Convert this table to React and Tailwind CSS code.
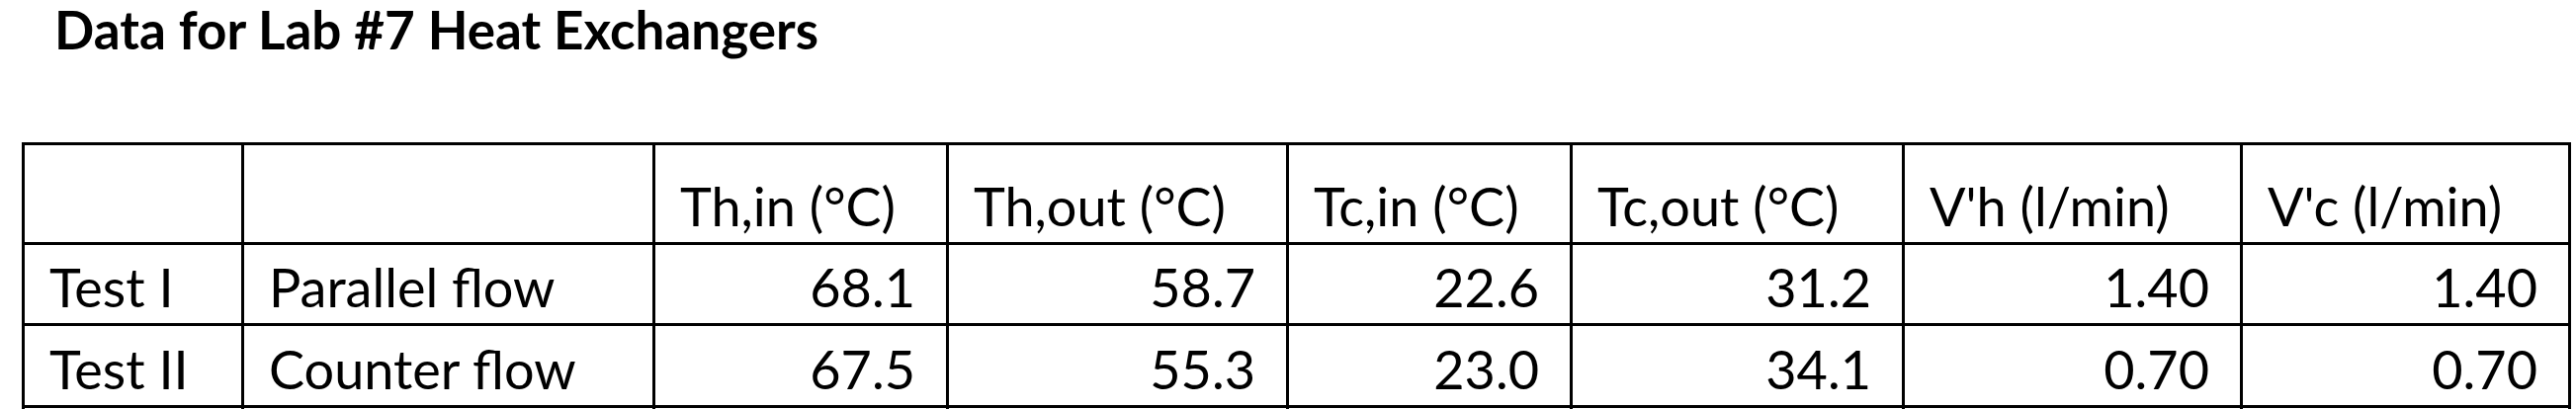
const headers = ["", "", "Th,in (°C)", "Th,out (°C)", "Tc,in (°C)", "Tc,out (°C)", "V'h (l/min)", "V'c (l/min)"];

const rows = [
  ["Test I", "Parallel flow", "68.1", "58.7", "22.6", "31.2", "1.40", "1.40"],
  ["Test II", "Counter flow", "67.5", "55.3", "23.0", "34.1", "0.70", "0.70"],
];

const cell = "border-r-[3px] border-b-[3px] border-black flex items-end pb-[9px] leading-none whitespace-nowrap";

export default function App() {
  return (
    <div className="bg-white min-h-screen text-black" style={{ fontFamily: "Lato, 'Open Sans', sans-serif" }}>
      <h1 className="pl-[55px] pt-[3px] text-[53px] font-bold leading-none">
        Data for Lab #7 Heat Exchangers
      </h1>

      <div className="ml-[22px] mt-[88px] w-max grid grid-cols-[222px_416px_297px_344px_287px_336px_342px_332px] border-l-[3px] border-t-[3px] border-black text-[54px]">
        {headers.map((h, i) => (
          <div key={"h" + i} className={`${cell} h-[101px] pl-[25px]`}>
            {h}
          </div>
        ))}
        {rows.map((r, ri) =>
          r.map((v, ci) => (
            <div
              key={ri + "-" + ci}
              className={`${cell} ${ri === 0 ? "h-[82px]" : "h-[83px]"} ${ci < 2 ? "pl-[25px]" : "justify-end pr-[31px]"}`}
            >
              {v}
            </div>
          ))
        )}
        {headers.map((_, i) => (
          <div key={"e" + i} className={`${cell} h-[82px]`} />
        ))}
      </div>
    </div>
  );
}
